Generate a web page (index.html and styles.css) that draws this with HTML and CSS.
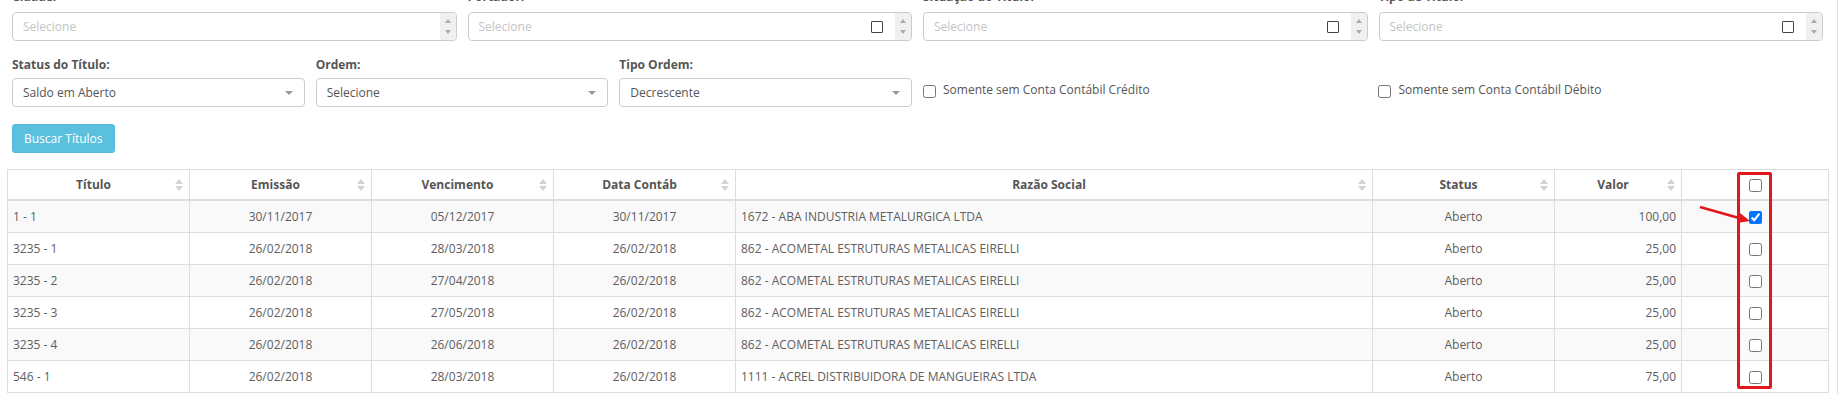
FILE: index.html
```html
<!DOCTYPE html>
<html lang="pt-BR">
<head>
  <meta charset="UTF-8" />
  <title>Títulos</title>
  <link rel="stylesheet" href="styles.css">
</head>
<body>

  <div class="page">
    <div class="filters">
      <div class="grid-row first">
        <div class="field span-3">
          <label>Cidade:</label>
          <div class="multi"><span>Selecione</span><span class="spin"></span></div>
        </div>
        <div class="field span-3">
          <label>Portador:</label>
          <div class="multi"><span>Selecione</span><span class="sq"></span><span class="spin"></span></div>
        </div>
        <div class="field span-3">
          <label>Situação do Título:</label>
          <div class="multi"><span>Selecione</span><span class="sq"></span><span class="spin"></span></div>
        </div>
        <div class="field span-3">
          <label>Tipo de Título:</label>
          <div class="multi"><span>Selecione</span><span class="sq"></span><span class="spin"></span></div>
        </div>
      </div>

      <div class="grid-row second">
        <div class="field span-2">
          <label>Status do Título:</label>
          <div class="select"><span>Saldo em Aberto</span><span class="caret"></span></div>
        </div>
        <div class="field span-2">
          <label>Ordem:</label>
          <div class="select"><span>Selecione</span><span class="caret"></span></div>
        </div>
        <div class="field span-2">
          <label>Tipo Ordem:</label>
          <div class="select"><span>Decrescente</span><span class="caret"></span></div>
        </div>
        <div class="check span-3">
          <input type="checkbox" />
          <span>Somente sem Conta Contábil Crédito</span>
        </div>
        <div class="check span-3">
          <input type="checkbox" />
          <span>Somente sem Conta Contábil Débito</span>
        </div>
      </div>

      <button class="btn-buscar">Buscar Títulos</button>
    </div>

    <table class="titles">
      <colgroup>
        <col style="width:182px"><col style="width:182px"><col style="width:182px"><col style="width:182px">
        <col style="width:637px"><col style="width:182px"><col style="width:127px"><col style="width:147px">
      </colgroup>
      <thead>
        <tr>
          <th>Título<span class="sort"></span></th>
          <th>Emissão<span class="sort"></span></th>
          <th>Vencimento<span class="sort"></span></th>
          <th>Data Contáb<span class="sort"></span></th>
          <th>Razão Social<span class="sort"></span></th>
          <th>Status<span class="sort"></span></th>
          <th>Valor<span class="sort"></span></th>
          <th class="c-check"><input type="checkbox" /></th>
        </tr>
      </thead>
      <tbody>
        <tr>
          <td>1 - 1</td><td class="c">30/11/2017</td><td class="c">05/12/2017</td><td class="c">30/11/2017</td>
          <td>1672 - ABA INDUSTRIA METALURGICA LTDA</td><td class="c">Aberto</td><td class="r">100,00</td>
          <td class="c"><input type="checkbox" checked /></td>
        </tr>
        <tr>
          <td>3235 - 1</td><td class="c">26/02/2018</td><td class="c">28/03/2018</td><td class="c">26/02/2018</td>
          <td>862 - ACOMETAL ESTRUTURAS METALICAS EIRELLI</td><td class="c">Aberto</td><td class="r">25,00</td>
          <td class="c"><input type="checkbox" /></td>
        </tr>
        <tr>
          <td>3235 - 2</td><td class="c">26/02/2018</td><td class="c">27/04/2018</td><td class="c">26/02/2018</td>
          <td>862 - ACOMETAL ESTRUTURAS METALICAS EIRELLI</td><td class="c">Aberto</td><td class="r">25,00</td>
          <td class="c"><input type="checkbox" /></td>
        </tr>
        <tr>
          <td>3235 - 3</td><td class="c">26/02/2018</td><td class="c">27/05/2018</td><td class="c">26/02/2018</td>
          <td>862 - ACOMETAL ESTRUTURAS METALICAS EIRELLI</td><td class="c">Aberto</td><td class="r">25,00</td>
          <td class="c"><input type="checkbox" /></td>
        </tr>
        <tr>
          <td>3235 - 4</td><td class="c">26/02/2018</td><td class="c">26/06/2018</td><td class="c">26/02/2018</td>
          <td>862 - ACOMETAL ESTRUTURAS METALICAS EIRELLI</td><td class="c">Aberto</td><td class="r">25,00</td>
          <td class="c"><input type="checkbox" /></td>
        </tr>
        <tr>
          <td>546 - 1</td><td class="c">26/02/2018</td><td class="c">28/03/2018</td><td class="c">26/02/2018</td>
          <td>1111 - ACREL DISTRIBUIDORA DE MANGUEIRAS LTDA</td><td class="c">Aberto</td><td class="r">75,00</td>
          <td class="c"><input type="checkbox" /></td>
        </tr>
      </tbody>
    </table>
  </div>

  <!-- annotation over the screenshot -->
  <div class="mark"></div>
  <svg class="arrow" width="60" height="30" viewBox="0 0 60 30">
    <line x1="5" y1="7" x2="44" y2="18" stroke="#e3161b" stroke-width="2.6" />
    <polygon points="55,21 42,23 45,13" fill="#e3161b" />
  </svg>

</body>
</html>
```

FILE: styles.css
```css
body {
  margin: 0;
  font-family: "Open Sans", "Liberation Sans", sans-serif;
  font-size: 12px;
  line-height: 17px;
  color: #555;
  background: #fff;
  overflow: hidden;
}

.page {
  width: 1838px;
  min-height: 420px;
  box-sizing: border-box;
  margin-top: -12px;
  padding: 0 9px 0 7px;
  border-right: 1px solid #e2e2e2;
}

.filters {
  padding: 0 5px;
}

.grid-row {
  display: grid;
  grid-template-columns: repeat(12, minmax(0, 1fr));
  column-gap: 11px;
}

.grid-row.second {
  margin-top: 15px;
}

.span-2 { grid-column: span 2; }
.span-3 { grid-column: span 3; }

.field label {
  display: block;
  font-weight: 700;
  margin-bottom: 5px;
}

.first .field label {
  margin-bottom: 7px;
}

.multi,
.select {
  height: 29px;
  box-sizing: border-box;
  border: 1px solid #ccc;
  border-radius: 4px;
  display: flex;
  align-items: center;
  padding-left: 10px;
}

.multi {
  color: #c4c4c4;
}

.multi .sq {
  width: 12px;
  height: 12px;
  box-sizing: border-box;
  border: 1.5px solid #444;
  border-radius: 1px;
  margin-left: auto;
  margin-right: 6px;
}

.multi .spin {
  align-self: stretch;
  width: 16px;
  margin-left: 6px;
  background: #f0f0f0;
  border-radius: 0 3px 3px 0;
  position: relative;
}

.multi span:first-child + .spin {
  margin-left: auto;
}

.multi .spin::before,
.multi .spin::after {
  content: "";
  position: absolute;
  left: 5px;
  border-left: 3.5px solid transparent;
  border-right: 3.5px solid transparent;
}

.multi .spin::before {
  top: 6px;
  border-bottom: 4px solid #aaa;
}

.multi .spin::after {
  bottom: 6px;
  border-top: 4px solid #aaa;
}

.select {
  padding-right: 11px;
  color: #555;
}

.select .caret {
  margin-left: auto;
  border-left: 4px solid transparent;
  border-right: 4px solid transparent;
  border-top: 4px solid #999;
}

.check {
  margin-top: 25px;
  display: flex;
  align-items: flex-start;
  gap: 7px;
}

.check input {
  margin: 4px 0 0;
}

.btn-buscar {
  margin-top: 17px;
  height: 29px;
  padding: 0 11px;
  font: inherit;
  color: #fff;
  background-color: #5bc0de;
  border: 1px solid #52bbdb;
  border-radius: 3px;
  cursor: pointer;
}

.titles {
  width: 1821px;
  margin-top: 16px;
  border-collapse: collapse;
  table-layout: fixed;
}

.titles th,
.titles td {
  border: 1px solid #ddd;
  white-space: nowrap;
}

.titles th {
  position: relative;
  padding: 6px 18px 6px 8px;
  font-weight: 700;
  text-align: center;
  border-bottom-width: 2px;
  background: #fff;
}

.titles th.c-check {
  padding: 6px 0;
}

.titles td {
  padding: 7px 5px;
  color: #5e5e5e;
}

.titles input {
  margin: 0;
  vertical-align: middle;
}

.titles tbody tr:nth-child(odd) td {
  background: #f9f9f9;
}

.titles .c { text-align: center; }
.titles .r { text-align: right; }

.sort {
  position: absolute;
  right: 6px;
  top: 50%;
  margin-top: -6px;
  width: 8px;
  height: 12px;
}

.sort::before,
.sort::after {
  content: "";
  position: absolute;
  left: 0;
  border-left: 4px solid transparent;
  border-right: 4px solid transparent;
}

.sort::before {
  top: 0;
  border-bottom: 5px solid #d3d3d3;
}

.sort::after {
  bottom: 0;
  border-top: 5px solid #d3d3d3;
}

.mark {
  position: absolute;
  left: 1737px;
  top: 172px;
  width: 35px;
  height: 217px;
  box-sizing: border-box;
  border: 3px solid #e3161b;
  border-radius: 2px;
}

.arrow {
  position: absolute;
  left: 1695px;
  top: 200px;
}
```
